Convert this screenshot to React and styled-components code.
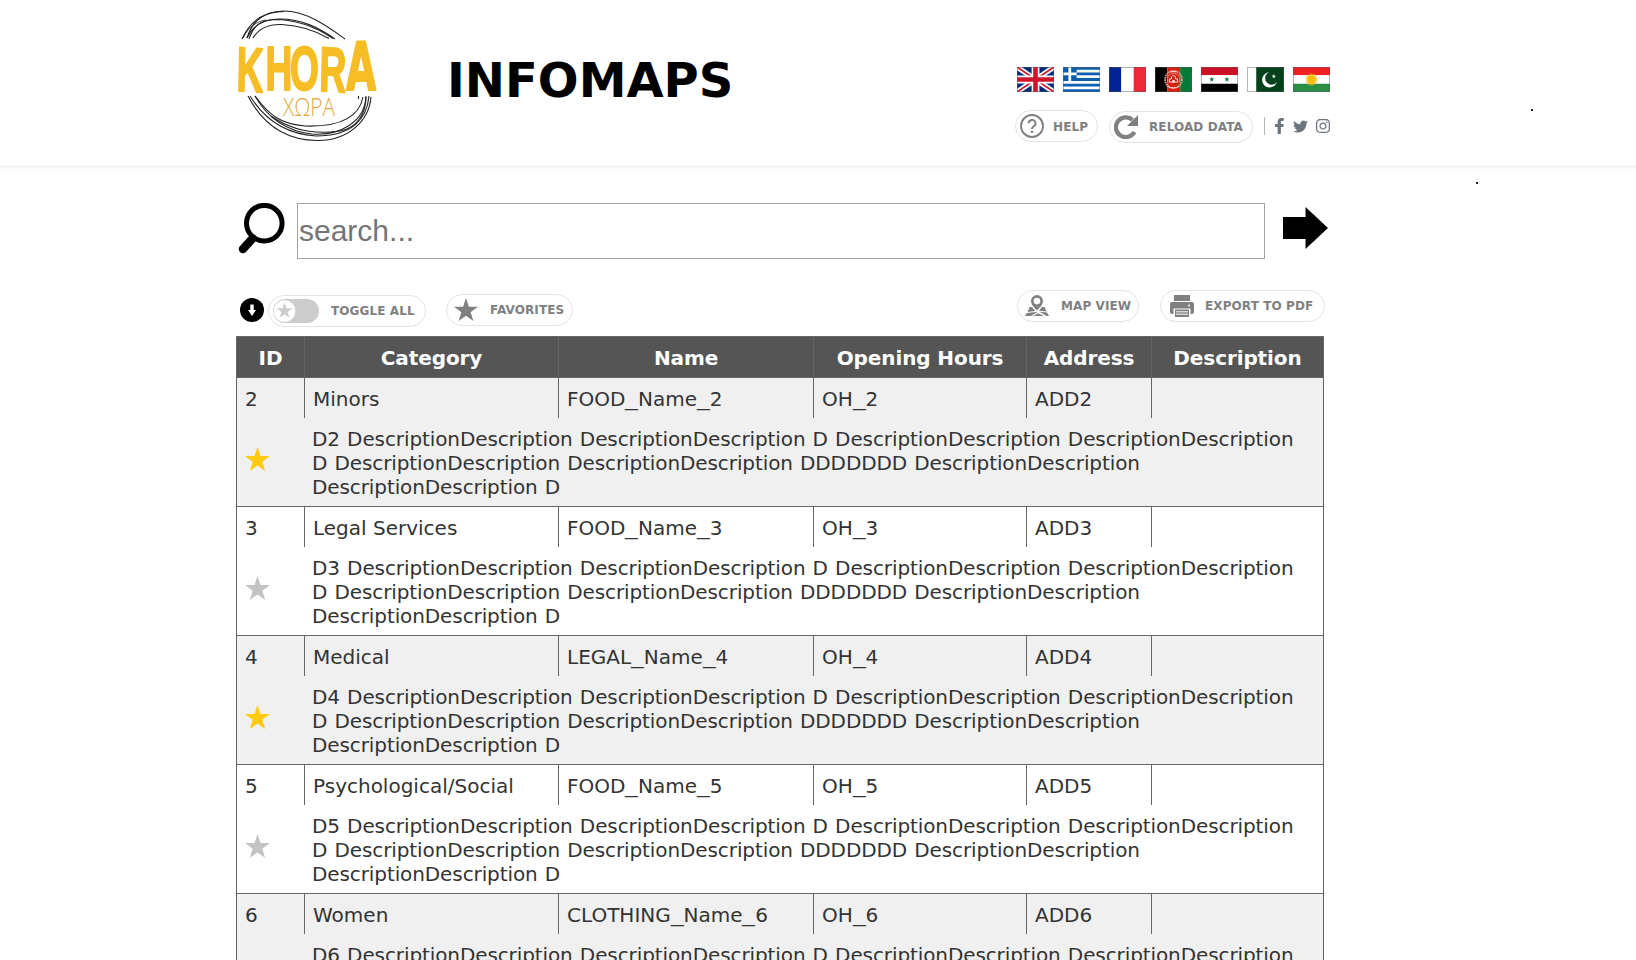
import React from "react";
import styled, { createGlobalStyle } from "styled-components";
import { FaTwitter, FaInstagram } from "react-icons/fa";

const Global = createGlobalStyle`
  * { box-sizing: border-box; }
  html, body { margin: 0; padding: 0; background: #fff; overflow: hidden; }
  body { font-family: "DejaVu Sans", Verdana, sans-serif; color: #333; }
`;

const Page = styled.div`
  position: relative;
  height: 960px;
  overflow: hidden;
`;

const Header = styled.header`
  height: 168px;
  border-bottom: 3px solid #f5f5f5;
  box-shadow: 0 1px 1px #fbfbfb;
`;

const HeaderInner = styled.div`
  display: flex;
  align-items: flex-start;
  width: 1094px;
  margin-left: 236px;
`;

const Logo = styled.svg`
  display: block;
  width: 180px;
  height: 150px;
  margin-left: -16px;
  flex: none;
`;

const Title = styled.h1`
  margin: 52px 0 0 47px;
  font-size: 48px;
  line-height: 56px;
  font-weight: bold;
  color: #000;
`;

const HeaderTools = styled.div`
  margin: 67px 0 0 auto;
  width: 315px;
`;

const Flags = styled.div`
  display: flex;
  gap: 9px;
  margin-left: 2px;
`;

const Flag = styled.svg`
  display: block;
  width: 37px;
  height: 25px;
  outline: 1px solid rgba(90, 90, 90, 0.45);
  outline-offset: -1px;
`;

const Actions = styled.div`
  display: flex;
  align-items: flex-start;
  margin-top: 18px;
`;

const Pill = styled.button`
  display: flex;
  align-items: center;
  flex: none;
  width: ${(p) => p.$width}px;
  height: 32px;
  margin: ${(p) => p.$margin || "0"};
  padding: 0 0 0 ${(p) => p.$pad}px;
  border: 1px solid #e4e4e4;
  border-radius: 16px;
  background: #fff;
  color: #808080;
  font: bold 12px/16px "DejaVu Sans", sans-serif;
  letter-spacing: 0.1px;
  white-space: nowrap;

  svg { flex: none; display: block; }
`;

const PillText = styled.span`
  margin-left: ${(p) => p.$gap}px;
  padding-top: ${(p) => p.$drop || 0}px;
`;

const Social = styled.div`
  display: flex;
  align-items: center;
  gap: 7px;
  height: 18px;
  margin: 7px 0 0 11px;
  padding-left: 10px;
  border-left: 1px solid #b5b5b5;
  color: #6c757d;
  svg { display: block; flex: none; }
  svg:first-child { margin-right: 2px; }
`;

const SearchRow = styled.form`
  display: flex;
  align-items: flex-start;
  margin: 35px 0 0 236px;
  width: 1094px;
  height: 56px;
`;

const SearchIcon = styled.svg`
  display: block;
  flex: none;
  width: 61px;
  height: 56px;
`;

const SearchInput = styled.input`
  flex: none;
  width: 968px;
  height: 56px;
  padding: 0 1px;
  border: 1px solid #a3a3a3;
  border-radius: 0;
  outline: none;
  font: 30px "Liberation Sans", Arial, sans-serif;
  &::placeholder { color: #757575; opacity: 1; }
`;

const Arrow = styled.svg`
  display: block;
  margin: 4px 0 0 18px;
  width: 45px;
  height: 42px;
`;

const Toolbar = styled.div`
  display: flex;
  align-items: flex-start;
  margin: 31px 0 0 236px;
  width: 1089px;
  height: 46px;
`;

const DownBadge = styled.svg`
  display: block;
  flex: none;
  width: 24px;
  height: 24px;
  margin: 8px 0 0 4px;
`;

const Table = styled.div`
  width: 1088px;
  margin-left: 236px;
  border: 1px solid #666;
  font-size: 20px;
  line-height: 24px;
`;

const columns = "67px 254px 255px 213px 125px 172px";

const HeadRow = styled.div`
  display: grid;
  grid-template-columns: ${columns};
  height: 41px;
  background: #555;
  border-bottom: 1px solid #666;
  color: #fff;
  font-weight: bold;
  letter-spacing: -0.1px;
`;

const HeadCell = styled.div`
  padding: 9px 0 7px;
  text-align: center;
  border-left: 1px solid #666;
  &:first-child { border-left: 0; }
`;

const Entry = styled.div`
  height: 129px;
  border-bottom: 1px solid #666;
  background: ${(p) => (p.$shaded ? "#f0f0f0" : "#fff")};
`;

const Fields = styled.div`
  display: grid;
  grid-template-columns: ${columns};
  height: 40px;
`;

const Cell = styled.div`
  padding: 9px 0 7px 8px;
  border-left: 1px solid #666;
  white-space: nowrap;
  &:first-child { border-left: 0; }
`;

const Underscore = styled.span`
  display: inline-block;
  width: 12.7px;
  transform: scaleX(1.27);
  transform-origin: 0 50%;
`;

const Details = styled.div`
  display: flex;
  height: 88px;
`;

const StarSlot = styled.div`
  flex: none;
  width: 75px;
  padding: 29px 0 0 8px;
  svg { display: block; }
`;

const Description = styled.p`
  margin: 9px 0 0;
  width: 1000px;
  white-space: pre-line;
  letter-spacing: -0.1px;
  word-spacing: 0.9px;
`;

const Speck = styled.i`
  position: absolute;
  left: ${(p) => p.$x}px;
  top: ${(p) => p.$y}px;
  width: 2px;
  height: 2px;
  background: #222;
`;

const starPoints = "12.5,0 15.5,9.1 25,9.1 17.3,14.8 20.2,24 12.5,18.4 4.8,24 7.7,14.8 0,9.1 9.5,9.1";

const Star = ({ size = 25, color }) => (
  <svg width={size} height={(size * 24) / 25} viewBox="0 0 25 24">
    <polygon points={starPoints} fill={color} />
  </svg>
);

const KhoraLogo = () => (
  <Logo viewBox="0 0 180 150">
    <g fill="none" stroke="#222" strokeWidth="1.1">
      <path d="M22 39C31 20 45 11 64 11c24 0 47 18 61 28" />
      <path d="M27 38C33 25 44 19 60 19c22 0 39 9 55 20" />
      <path d="M27 38C34 16 48 12 64 11.500" />
      <path d="M29 39C33 27 39 20 55 19.500c22 0 43 9 58 19" />
      <path d="M33 38C39 28 49 24 62 24.500c18 1 35 7 47 14" />
      <path d="M23 38C29 26 38 21 46 20" strokeWidth=".8" />
      <path d="M28 96c12 23 33 44 69 44.500C128 141 149 121 151 97" />
      <path d="M30 96c13 21 33 38 66 40c36 0 51-17 53-40" />
      <path d="M35 96c12 21 30 35 57 38c28 2 53-12 54-38" />
      <path d="M35 96c15 20 26 28 50 30c33 1 54-8 58-29" />
      <path d="M51 116c20 14 42 19 69 15c18-3 26-19 26-34M138.500 96v3" />
    </g>
    <text
      transform="translate(0 90.700) scale(.59 1)"
      x="27.500 77 118.500 168 213.500"
      y="0 -1 -1 0 -1"
      rotate="2 0 0 2 0"
      fontFamily="Liberation Sans, Arial, sans-serif"
      fontWeight="bold"
      fontSize="63"
      fill="#f7bd25"
      stroke="#f7bd25"
      strokeWidth="2"
      strokeLinejoin="round"
    >
      KHOR<tspan fontFamily="DejaVu Sans, sans-serif" fontSize="66">A</tspan>
    </text>
    <text
      transform="translate(63 115.500) scale(.8 1)"
      fontFamily="Open Sans, Noto Sans, sans-serif"
      fontWeight="300"
      fontSize="26"
      fill="#e3a83a"
    >
      ΧΩΡΑ
    </text>
  </Logo>
);

const flagProps = { viewBox: "0 0 36 24", preserveAspectRatio: "none" };

const FlagUK = () => (
  <Flag {...flagProps}>
    <path d="M0 0h36v24H0z" fill="#012a7d" />
    <path d="M0 0l36 24M36 0L0 24" stroke="#fff" strokeWidth="5" />
    <path d="M0 0l36 24M36 0L0 24" stroke="#cf142b" strokeWidth="1.6" />
    <path d="M18 0v24M0 12h36" stroke="#fff" strokeWidth="7.600" />
    <path d="M18 0v24M0 12h36" stroke="#cf142b" strokeWidth="4.500" />
  </Flag>
);

const FlagGreece = () => (
  <Flag {...flagProps}>
    <path d="M0 0h36v24H0z" fill="#fff" />
    <path d="M0 1.330h36M0 6.670h36M0 12h36M0 17.330h36M0 22.670h36" stroke="#0d5eaf" strokeWidth="2.67" />
    <path d="M0 0h13.300v13.330H0z" fill="#0d5eaf" />
    <path d="M6.600 0v13.330M0 6.660h13.300" stroke="#fff" strokeWidth="2.670" />
  </Flag>
);

const FlagFrance = () => (
  <Flag {...flagProps}>
    <path d="M0 0h12v24H0z" fill="#002395" />
    <path d="M12 0h12v24H12z" fill="#fff" />
    <path d="M24 0h12v24H24z" fill="#ed2939" />
  </Flag>
);

const FlagAfghanistan = () => (
  <Flag {...flagProps}>
    <path d="M0 0h12v24H0z" fill="#000" />
    <path d="M12 0h12.500v24H12z" fill="#d32011" />
    <path d="M24.500 0H36v24H24.500z" fill="#007a36" />
    <circle cx="18" cy="12" r="8.200" fill="none" stroke="#e8948a" strokeWidth="1.800" strokeDasharray="1.6 .6" />
    <path d="M12.500 15a6.200 6.200 0 1 1 11 0" fill="none" stroke="#e8948a" strokeWidth=".8" />
    <path d="M14 14.500v-3h2V9.500q2-3 4 0v2h2v3zM12 18.500q6 3 12 0M15 4.500h6" fill="#d32011" stroke="#fbe4e1" strokeWidth=".9" />
    <path d="M17 15v-2.500h2v2.500z" fill="#fff" />
  </Flag>
);

const FlagSyria = () => (
  <Flag {...flagProps}>
    <path d="M0 0h36v8H0z" fill="#ce1126" />
    <path d="M0 8h36v8H0z" fill="#fff" />
    <path d="M0 16h36v8H0z" fill="#000" />
    <polygon transform="translate(8 9.300) scale(.2)" points={starPoints} fill="#007a3d" />
    <polygon transform="translate(22.700 9.300) scale(.2)" points={starPoints} fill="#007a3d" />
  </Flag>
);

const FlagPakistan = () => (
  <Flag {...flagProps}>
    <path d="M0 0h36v24H0z" fill="#01411c" />
    <path d="M0 0h9v24H0z" fill="#fff" />
    <circle cx="22" cy="12.300" r="7.300" fill="#fff" />
    <circle cx="24" cy="10.700" r="6.300" fill="#01411c" />
    <polygon transform="translate(24.300 6.400) rotate(8) scale(.17)" points={starPoints} fill="#fff" />
  </Flag>
);

const FlagKurdistan = () => (
  <Flag {...flagProps}>
    <path d="M0 0h36v8H0z" fill="#ed2024" />
    <path d="M0 8h36v8H0z" fill="#fff" />
    <path d="M0 16h36v8H0z" fill="#278e43" />
    <circle cx="18" cy="12" r="4.300" fill="#febd11" />
    <circle cx="18" cy="12" r="5" fill="none" stroke="#febd11" strokeWidth="1.800" strokeDasharray="1 .9" />
  </Flag>
);

const HelpIcon = () => (
  <svg width="24" height="24" viewBox="0 0 24 24" fill="none" stroke="#808080">
    <circle cx="12" cy="12" r="11" strokeWidth="1.900" />
    <path d="M8.700 9.300a3.400 3.400 0 1 1 5 3c-1.200.8-1.700 1.300-1.700 2.600" strokeWidth="1.900" />
    <circle cx="12" cy="17.700" r="1.300" fill="#808080" stroke="none" />
  </svg>
);

const ReloadIcon = () => (
  <svg width="24" height="24" viewBox="0 0 24 24">
    <path d="M20.500 17A9.900 9.900 0 1 1 18.500 4.900" fill="none" stroke="#808080" strokeWidth="4.200" />
    <path d="M24 0v11H13z" fill="#808080" />
  </svg>
);

const MapIcon = () => (
  <svg width="24" height="22" viewBox="0 0 24 22" fill="#808080">
    <path fillRule="evenodd" d="M12 0a6 6 0 0 1 6 6c0 3.500-3.500 7-6 9.500C9.500 13 6 9.500 6 6a6 6 0 0 1 6-6zm0 2.800a3.300 3.300 0 1 0 0 6.600 3.300 3.300 0 0 0 0-6.600z" />
    <path d="M4.500 12H7l3.300 4L2.600 17z" />
    <path d="M17 12h2.600l2 4.500L14 15.700z" />
    <path d="M1.800 18l11-1.200L6 21H0z" />
    <path d="M14.500 16.800l7.500.6 2 3.600h-2.500z" />
    <path d="M8 21l5-2.800 6 2.800z" />
  </svg>
);

const PrinterIcon = () => (
  <svg width="24" height="23" viewBox="0 0 24 23">
    <path d="M4 0h16v6H4zM2 7h20q2 0 2 2v8q0 2-2 2H2q-2 0-2-2V9q0-2 2-2z" fill="#808080" />
    <path d="M3.500 13.500h17V23h-17z" fill="#fff" />
    <path d="M5 14.500h14V22H5z" fill="#808080" />
    <path d="M6 16.800h12M6 19.200h12" stroke="#fff" strokeWidth="1" />
    <circle cx="19" cy="10.500" r="1" fill="#fff" />
  </svg>
);

const ToggleSwitch = () => (
  <svg width="46" height="24" viewBox="0 0 46 24">
    <rect width="46" height="24" rx="12" fill="#ccc" />
    <circle cx="11.500" cy="12" r="10.800" fill="#fff" />
    <polygon transform="translate(3.500 3.500) scale(.64)" points={starPoints} fill="#ccc" />
  </svg>
);

const withUnderscores = (text) =>
  text.split("_").map((part, i) => (
    <React.Fragment key={i}>
      {i > 0 && <Underscore>_</Underscore>}
      {part}
    </React.Fragment>
  ));

const headings = ["ID", "Category", "Name", "Opening Hours", "Address", "Description"];

const entries = [
  { id: 2, category: "Minors", name: "FOOD_Name_2", starred: true },
  { id: 3, category: "Legal Services", name: "FOOD_Name_3", starred: false },
  { id: 4, category: "Medical", name: "LEGAL_Name_4", starred: true },
  { id: 5, category: "Psychological/Social", name: "FOOD_Name_5", starred: false },
  { id: 6, category: "Women", name: "CLOTHING_Name_6", starred: true },
];

const describe = (id) =>
  `D${id} DescriptionDescription DescriptionDescription D DescriptionDescription DescriptionDescription\n` +
  "D DescriptionDescription DescriptionDescription DDDDDDD DescriptionDescription\n" +
  "DescriptionDescription D";

export default function App() {
  return (
    <Page>
      <Global />
      <Header>
        <HeaderInner>
          <KhoraLogo />
          <Title>INFOMAPS</Title>
          <HeaderTools>
            <Flags>
              <FlagUK />
              <FlagGreece />
              <FlagFrance />
              <FlagAfghanistan />
              <FlagSyria />
              <FlagPakistan />
              <FlagKurdistan />
            </Flags>
            <Actions>
              <Pill $width={83} $pad={4}>
                <HelpIcon />
                <PillText $gap={9} $drop={1}>HELP</PillText>
              </Pill>
              <Pill $width={144} $pad={4} $margin="1px 0 0 11px">
                <ReloadIcon />
                <PillText $gap={11}>RELOAD DATA</PillText>
              </Pill>
              <Social>
                <svg width="9" height="16" viewBox="22 0 280 512" preserveAspectRatio="none" fill="currentColor">
                  <path d="M279 288l14-93h-89v-60c0-25 12-50 52-50h41V7s-37-7-72-7c-73 0-121 44-121 125v70H23v93h81v224h100V288z" />
                </svg>
                <FaTwitter size={15} />
                <FaInstagram size={16} />
              </Social>
            </Actions>
          </HeaderTools>
        </HeaderInner>
      </Header>

      <SearchRow>
        <SearchIcon viewBox="0 0 61 56">
          <circle cx="28.300" cy="20.200" r="17.800" fill="none" stroke="#000" strokeWidth="5" />
          <path d="M16.500 35.500L7 46" stroke="#000" strokeWidth="8.500" strokeLinecap="round" />
        </SearchIcon>
        <SearchInput placeholder="search..." />
        <Arrow viewBox="0 0 45 42">
          <path d="M0 10h22.500V0L45 21 22.500 42V32H0z" />
        </Arrow>
      </SearchRow>

      <Toolbar>
        <DownBadge viewBox="0 0 24 24">
          <circle cx="12" cy="12" r="12" />
          <path d="M10.300 6.500h3.400V12H16l-4 6-4-6h2.300z" fill="#fff" />
        </DownBadge>
        <Pill $width={158} $pad={4} $margin="5px 0 0 4px">
          <ToggleSwitch />
          <PillText $gap={12}>TOGGLE ALL</PillText>
        </Pill>
        <Pill $width={127} $pad={7} $margin="4px 0 0 20px">
          <Star size={24} color="#808080" />
          <PillText $gap={12}>FAVORITES</PillText>
        </Pill>
        <Pill $width={122} $pad={7} $margin="0 0 0 auto">
          <MapIcon />
          <PillText $gap={12}>MAP VIEW</PillText>
        </Pill>
        <Pill $width={165} $pad={9} $margin="0 0 0 21px">
          <PrinterIcon />
          <PillText $gap={11}>EXPORT TO PDF</PillText>
        </Pill>
      </Toolbar>

      <Table>
        <HeadRow>
          {headings.map((h) => (
            <HeadCell key={h}>{h}</HeadCell>
          ))}
        </HeadRow>
        {entries.map((e, i) => (
          <Entry key={e.id} $shaded={i % 2 === 0}>
            <Fields>
              <Cell>{e.id}</Cell>
              <Cell>{e.category}</Cell>
              <Cell>{withUnderscores(e.name)}</Cell>
              <Cell>{withUnderscores(`OH_${e.id}`)}</Cell>
              <Cell>{`ADD${e.id}`}</Cell>
              <Cell />
            </Fields>
            <Details>
              <StarSlot>
                <Star color={e.starred ? "#ffc90e" : "#c3c3c3"} />
              </StarSlot>
              <Description>{describe(e.id)}</Description>
            </Details>
          </Entry>
        ))}
      </Table>

      <Speck $x={1531} $y={109} />
      <Speck $x={1476} $y={182} />
    </Page>
  );
}
